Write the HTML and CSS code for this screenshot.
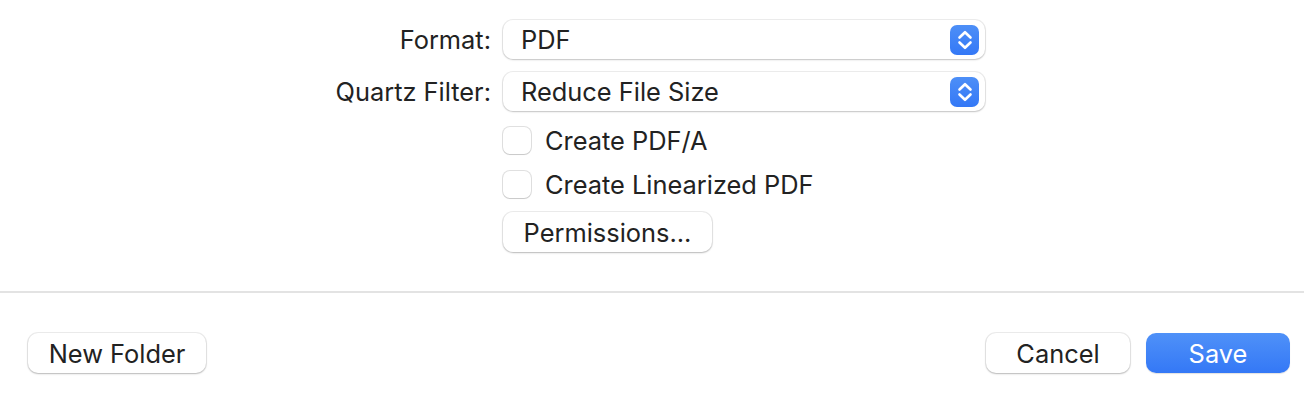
FILE: index.html
```html
<!DOCTYPE html>
<html>
<head>
<meta charset="utf-8">
<link rel="stylesheet" href="styles.css">
</head>
<body>
<div class="dialog">
  <div class="options">
    <div class="form">
      <div class="label row-popup">Format:</div>
      <div class="popup row-popup">
        <span class="popup-text">PDF</span>
        <span class="stepper">
          <svg width="18" height="22" viewBox="0 0 18 22"><path d="M3.5 8.5 L9 3.2 L14.5 8.5 M3.5 13.5 L9 18.8 L14.5 13.5" fill="none" stroke="#fff" stroke-width="2.6" stroke-linecap="round" stroke-linejoin="round"/></svg>
        </span>
      </div>
      <div class="label row-popup2">Quartz Filter:</div>
      <div class="popup row-popup2">
        <span class="popup-text">Reduce File Size</span>
        <span class="stepper">
          <svg width="18" height="22" viewBox="0 0 18 22"><path d="M3.5 8.5 L9 3.2 L14.5 8.5 M3.5 13.5 L9 18.8 L14.5 13.5" fill="none" stroke="#fff" stroke-width="2.6" stroke-linecap="round" stroke-linejoin="round"/></svg>
        </span>
      </div>
      <div class="label"></div>
      <label class="check row-check1"><span class="box"></span><span>Create PDF/A</span></label>
      <div class="label"></div>
      <label class="check row-check2"><span class="box"></span><span>Create Linearized PDF</span></label>
      <div class="label"></div>
      <div class="row-perm"><button class="btn perm">Permissions...</button></div>
    </div>
  </div>
  <div class="separator"></div>
  <div class="footer">
    <button class="btn newfolder">New Folder</button>
    <div class="footer-right">
      <button class="btn cancel">Cancel</button>
      <button class="btn save">Save</button>
    </div>
  </div>
</div>
</body>
</html>
```
FILE: styles.css
```css
html, body {
  margin: 0;
  padding: 0;
  background: #ffffff;
}
body {
  font-family: Inter, "Liberation Sans", sans-serif;
  font-size: 25.4px;
  color: #222222;
  width: 1304px;
  height: 396px;
  overflow: hidden;
}
.dialog {
  display: flex;
  flex-direction: column;
}
.options {
  height: 291px;
  padding-top: 20px;
  box-sizing: border-box;
}
.form {
  display: grid;
  grid-template-columns: 491px 482px;
  column-gap: 12px;
  align-items: center;
}
.label {
  text-align: right;
}
.row-popup { margin-bottom: 13px; }
.row-popup2 { margin-bottom: 15px; }
.row-check1 { margin-bottom: 16px; }
.row-check2 { margin-bottom: 14px; }
.popup {
  height: 39px;
  box-sizing: border-box;
  background: #fff;
  border-radius: 10px;
  box-shadow: 0 0 0 1px rgba(0,0,0,0.07), 0 1px 2px rgba(0,0,0,0.18);
  display: flex;
  align-items: center;
  justify-content: space-between;
  padding: 0 6px 0 18px;
}
.stepper {
  width: 29px;
  height: 30px;
  border-radius: 7px;
  background: linear-gradient(#4d8ff7, #3478f6);
  display: flex;
  align-items: center;
  justify-content: center;
}
.check {
  display: flex;
  align-items: center;
  gap: 14px;
  height: 28px;
}
.box {
  width: 28px;
  height: 27px;
  box-sizing: border-box;
  border-radius: 7px;
  background: #fff;
  box-shadow: 0 0 0 1px rgba(0,0,0,0.12), 0 1px 1px rgba(0,0,0,0.1);
}
.btn {
  font-family: inherit;
  font-size: 25.4px;
  color: #222222;
  height: 40px;
  box-sizing: border-box;
  border: none;
  border-radius: 10px;
  background: #fff;
  box-shadow: 0 0 0 1px rgba(0,0,0,0.07), 0 1px 2px rgba(0,0,0,0.22);
  padding: 0;
  display: flex;
  align-items: center;
  justify-content: center;
}
.perm { width: 209px; }
.separator {
  height: 2px;
  background: #e3e3e3;
}
.footer {
  display: flex;
  justify-content: space-between;
  padding: 40px 14px 0 28px;
}
.footer-right {
  display: flex;
  gap: 16px;
}
.newfolder { width: 178px; }
.cancel { width: 144px; }
.save {
  width: 144px;
  color: #fff;
  background: linear-gradient(#4f91f8, #3478f6);
  box-shadow: 0 1px 1px rgba(0,0,0,0.12);
}
```
